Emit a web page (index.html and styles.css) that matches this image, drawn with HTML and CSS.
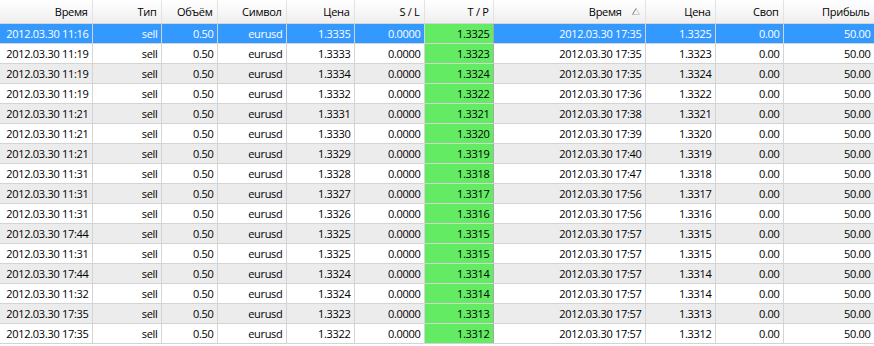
FILE: index.html
```html
<!DOCTYPE html>
<html>
<head>
  <title>История сделок</title>
  <link rel="stylesheet" href="styles.css">
</head>

<body>
  <table class="trade-table">
    <colgroup>
      <col class="col-time">
      <col class="col-type">
      <col class="col-volume">
      <col class="col-symbol">
      <col class="col-price">
      <col class="col-sl">
      <col class="col-tp">
      <col class="col-close-time">
      <col class="col-close-price">
      <col class="col-swap">
      <col class="col-profit">
    </colgroup>
    <thead>
      <tr>
        <th>Время</th>
        <th>Тип</th>
        <th>Объём</th>
        <th>Символ</th>
        <th>Цена</th>
        <th>S / L</th>
        <th>T / P</th>
        <th class="sorted">Время<svg class="sort-arrow" width="8" height="7" viewBox="0 0 8 7"><path d="M0.5 6.5 L4 0.5 L7.5 6.5 Z" fill="none" stroke="#c8c8c8"/><path d="M0.5 6.5 L4 0.5" stroke="#8a8a8a"/></svg></th>
        <th>Цена</th>
        <th>Своп</th>
        <th>Прибыль</th>
      </tr>
    </thead>
    <tbody>
      <tr class="selected">
        <td>2012.03.30 11:16</td><td>sell</td><td>0.50</td><td>eurusd</td><td>1.3335</td><td>0.0000</td><td class="tp">1.3325</td><td>2012.03.30 17:35</td><td>1.3325</td><td>0.00</td><td>50.00</td>
      </tr>
      <tr>
        <td>2012.03.30 11:19</td><td>sell</td><td>0.50</td><td>eurusd</td><td>1.3333</td><td>0.0000</td><td class="tp">1.3323</td><td>2012.03.30 17:35</td><td>1.3323</td><td>0.00</td><td>50.00</td>
      </tr>
      <tr>
        <td>2012.03.30 11:19</td><td>sell</td><td>0.50</td><td>eurusd</td><td>1.3334</td><td>0.0000</td><td class="tp">1.3324</td><td>2012.03.30 17:35</td><td>1.3324</td><td>0.00</td><td>50.00</td>
      </tr>
      <tr>
        <td>2012.03.30 11:19</td><td>sell</td><td>0.50</td><td>eurusd</td><td>1.3332</td><td>0.0000</td><td class="tp">1.3322</td><td>2012.03.30 17:36</td><td>1.3322</td><td>0.00</td><td>50.00</td>
      </tr>
      <tr>
        <td>2012.03.30 11:21</td><td>sell</td><td>0.50</td><td>eurusd</td><td>1.3331</td><td>0.0000</td><td class="tp">1.3321</td><td>2012.03.30 17:38</td><td>1.3321</td><td>0.00</td><td>50.00</td>
      </tr>
      <tr>
        <td>2012.03.30 11:21</td><td>sell</td><td>0.50</td><td>eurusd</td><td>1.3330</td><td>0.0000</td><td class="tp">1.3320</td><td>2012.03.30 17:39</td><td>1.3320</td><td>0.00</td><td>50.00</td>
      </tr>
      <tr>
        <td>2012.03.30 11:21</td><td>sell</td><td>0.50</td><td>eurusd</td><td>1.3329</td><td>0.0000</td><td class="tp">1.3319</td><td>2012.03.30 17:40</td><td>1.3319</td><td>0.00</td><td>50.00</td>
      </tr>
      <tr>
        <td>2012.03.30 11:31</td><td>sell</td><td>0.50</td><td>eurusd</td><td>1.3328</td><td>0.0000</td><td class="tp">1.3318</td><td>2012.03.30 17:47</td><td>1.3318</td><td>0.00</td><td>50.00</td>
      </tr>
      <tr>
        <td>2012.03.30 11:31</td><td>sell</td><td>0.50</td><td>eurusd</td><td>1.3327</td><td>0.0000</td><td class="tp">1.3317</td><td>2012.03.30 17:56</td><td>1.3317</td><td>0.00</td><td>50.00</td>
      </tr>
      <tr>
        <td>2012.03.30 11:31</td><td>sell</td><td>0.50</td><td>eurusd</td><td>1.3326</td><td>0.0000</td><td class="tp">1.3316</td><td>2012.03.30 17:56</td><td>1.3316</td><td>0.00</td><td>50.00</td>
      </tr>
      <tr>
        <td>2012.03.30 17:44</td><td>sell</td><td>0.50</td><td>eurusd</td><td>1.3325</td><td>0.0000</td><td class="tp">1.3315</td><td>2012.03.30 17:57</td><td>1.3315</td><td>0.00</td><td>50.00</td>
      </tr>
      <tr>
        <td>2012.03.30 11:31</td><td>sell</td><td>0.50</td><td>eurusd</td><td>1.3325</td><td>0.0000</td><td class="tp">1.3315</td><td>2012.03.30 17:57</td><td>1.3315</td><td>0.00</td><td>50.00</td>
      </tr>
      <tr>
        <td>2012.03.30 17:44</td><td>sell</td><td>0.50</td><td>eurusd</td><td>1.3324</td><td>0.0000</td><td class="tp">1.3314</td><td>2012.03.30 17:57</td><td>1.3314</td><td>0.00</td><td>50.00</td>
      </tr>
      <tr>
        <td>2012.03.30 11:32</td><td>sell</td><td>0.50</td><td>eurusd</td><td>1.3324</td><td>0.0000</td><td class="tp">1.3314</td><td>2012.03.30 17:57</td><td>1.3314</td><td>0.00</td><td>50.00</td>
      </tr>
      <tr>
        <td>2012.03.30 17:35</td><td>sell</td><td>0.50</td><td>eurusd</td><td>1.3323</td><td>0.0000</td><td class="tp">1.3313</td><td>2012.03.30 17:57</td><td>1.3313</td><td>0.00</td><td>50.00</td>
      </tr>
      <tr>
        <td>2012.03.30 17:35</td><td>sell</td><td>0.50</td><td>eurusd</td><td>1.3322</td><td>0.0000</td><td class="tp">1.3312</td><td>2012.03.30 17:57</td><td>1.3312</td><td>0.00</td><td>50.00</td>
      </tr>
    </tbody>
  </table>
</body>
</html>
```

FILE: styles.css
```css
body {
  margin: 0;
  background-color: #fff;
  font-family: "Open Sans", "Liberation Sans", Arial, sans-serif;
  font-size: 11px;
  letter-spacing: -0.3px;
  color: #000;
}

.trade-table {
  width: 874px;
  table-layout: fixed;
  border-collapse: collapse;
}

.col-time { width: 92px; }
.col-type { width: 69px; }
.col-volume { width: 56px; }
.col-symbol { width: 69px; }
.col-price { width: 68px; }
.col-sl { width: 70px; }
.col-tp { width: 69px; }
.col-close-time { width: 152px; }
.col-close-price { width: 70px; }
.col-swap { width: 68px; }
.col-profit { width: 91px; }

th {
  height: 23px;
  padding: 0 4px 0 0;
  font-weight: normal;
  text-align: right;
  background: linear-gradient(#ffffff, #f7f7f7 50%, #eeeeee);
  border-right: 1px solid #e3e3e3;
  border-bottom: 1px solid #d5d5d5;
  white-space: nowrap;
}

th.sorted {
  padding-right: 5px;
}

.sort-arrow {
  margin-left: 10px;
  vertical-align: 1px;
}

td {
  height: 19px;
  padding: 0 3px 0 0;
  text-align: right;
  white-space: nowrap;
  border-right: 1px solid #d4d4d4;
  border-bottom: 1px solid #d4d4d4;
}

tbody tr:nth-child(odd) {
  background-color: #ececec;
}

tbody tr.selected {
  background-color: #3399ff;
  color: #fff;
}

td.tp {
  background-color: #63ec63;
  color: #000;
  border-right-color: #a8a8a8;
  border-left: 1px solid #a8a8a8;
}
```
